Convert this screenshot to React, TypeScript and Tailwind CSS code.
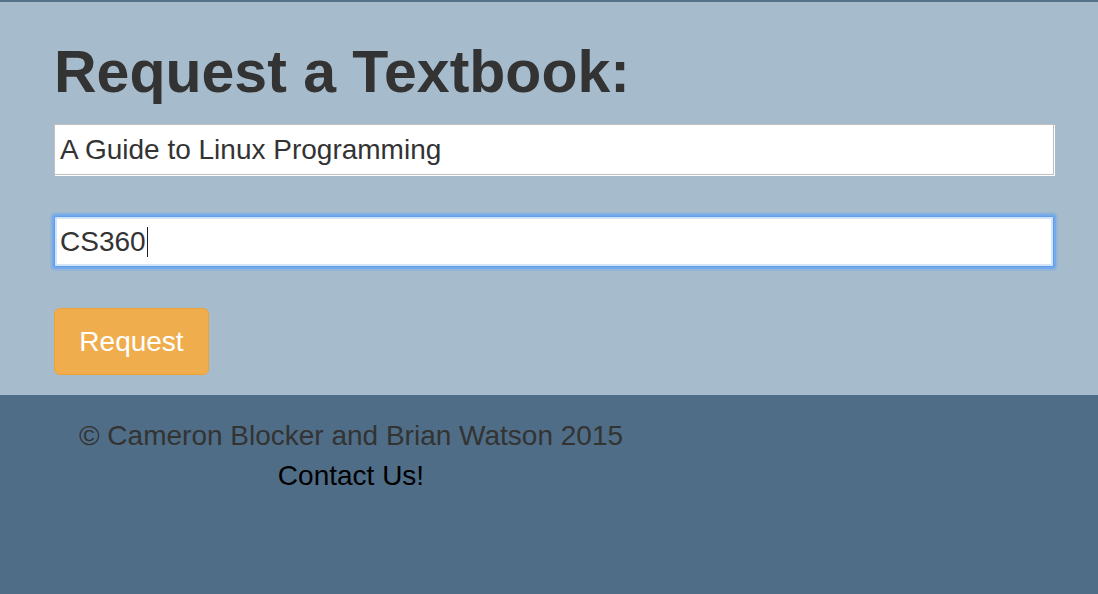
import React from "react";

const RequestPage = () => {
  return (
    <div className="min-h-screen flex flex-col bg-[#4f6d86] font-['Liberation_Sans',Arial,sans-serif]">
      <div className="bg-[#a6bccc] border-t-2 border-[#56728b] px-[54px] pt-[37px] pb-5 flex flex-col">
        <h1 className="text-[59px] leading-[66px] font-bold text-[#333333]">Request a Textbook:</h1>

        <div className="mt-[19px] w-[1000px] h-[51px] bg-white border border-[#bfbfbf] shadow-[1px_1px_0_#ffffff] px-[5px] flex items-center text-[28px] text-[#333333]">
          A Guide to Linux Programming
        </div>

        <div className="mt-[41px] w-[1000px] h-[51px] bg-white border border-[#5d9de9] rounded-[2px] shadow-[0_0_0_2px_#74a9ec,0_0_0_4px_rgba(120,170,230,0.4),inset_0_0_0_2px_#d4e4f8] px-[5px] flex items-center text-[28px] text-[#333333]">
          CS360
          <span className="inline-block w-[1.5px] h-[30px] bg-[#222222] ml-[1px]" />
        </div>

        <button className="mt-[41px] w-[155px] h-[67px] rounded-[6px] bg-[#f0ad4e] border border-[#eea236] text-white text-[28px] flex items-center justify-center">
          Request
        </button>
      </div>

      <footer className="flex-1 px-[54px] pt-[21px]">
        <div className="w-[594px] text-center text-[28px] leading-[40px]">
          <p className="text-[#333333]">© Cameron Blocker and Brian Watson 2015</p>
          <a href="#" className="text-black">Contact Us!</a>
        </div>
      </footer>
    </div>
  );
};

export default function App() {
  return <RequestPage />;
}
